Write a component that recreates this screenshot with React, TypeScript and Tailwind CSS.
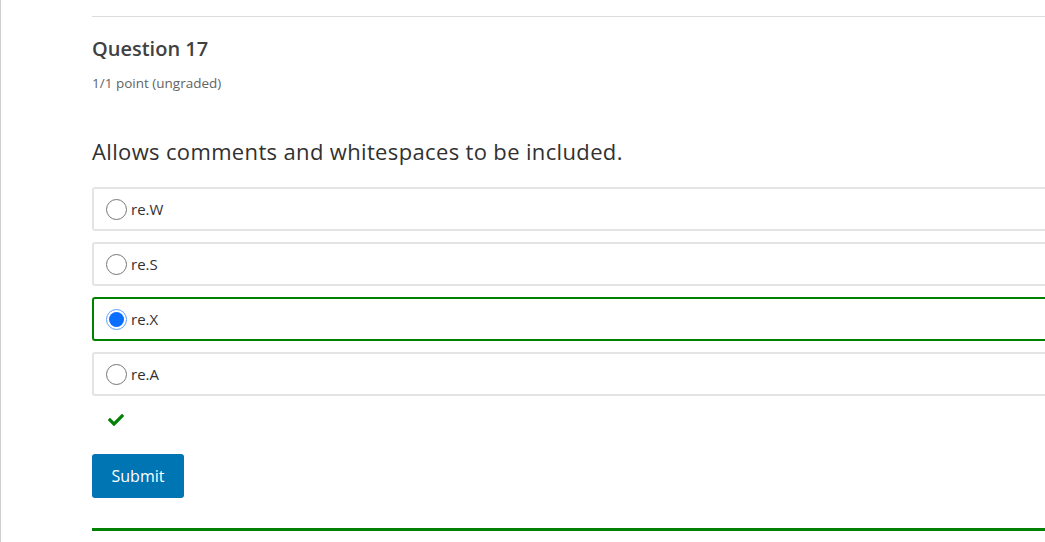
import React from 'react'
import { FaCheck } from 'react-icons/fa'

const options = [
  { id: 'w', label: 're.W' },
  { id: 's', label: 're.S' },
  { id: 'x', label: 're.X' },
  { id: 'a', label: 're.A' },
]

export default function App() {
  const selected = 'x'
  return (
    <div className="h-[542px] w-[1045px] overflow-hidden border-l border-[#cfcfcf] bg-white font-['Open_Sans',sans-serif] text-[#313131]">
      <div className="ml-[91px] w-[1000px]">
        <div className="h-[16px]" />
        <hr className="border-t border-[#dcdcdc]" />

        <h3 className="mt-[19px] text-[20px] font-semibold leading-[26px] text-[#414141]">Question 17</h3>
        <div className="mt-[12px] text-[13.5px] leading-[18px] text-[#646464]">1/1 point (ungraded)</div>

        <p className="mt-[44px] text-[22px] leading-[30px] tracking-[0.35px]">
          Allows comments and whitespaces to be included.
        </p>

        <div className="mt-[21px] flex flex-col gap-[11px]">
          {options.map((o) => {
            const isSel = o.id === selected
            return (
              <label
                key={o.id}
                className={`flex h-[44px] items-center rounded-[3px] border-2 pl-[12px] ${
                  isSel ? 'border-[#008100]' : 'border-[#e4e4e4]'
                }`}
              >
                {isSel ? (
                  <span className="flex h-[21px] w-[21px] items-center justify-center rounded-full border border-[#5c9eff] bg-white">
                    <span className="h-[15px] w-[15px] rounded-full bg-[#0a6eff]" />
                  </span>
                ) : (
                  <span className="h-[21px] w-[21px] rounded-full border border-[#767676] bg-white" />
                )}
                <span className="ml-[4px] text-[15px] leading-[20px] text-[#313131]">{o.label}</span>
              </label>
            )
          })}
        </div>

        <div className="ml-[16px] mt-[16px] h-[16px]">
          <FaCheck size={16} color="#008100" />
        </div>

        <button className="mt-[26px] h-[44px] w-[92px] rounded-[3px] bg-[#0075b4] text-[16px] text-white">
          Submit
        </button>

        <div className="mt-[30px] h-[3px] bg-[#008100]" />
      </div>
    </div>
  )
}
